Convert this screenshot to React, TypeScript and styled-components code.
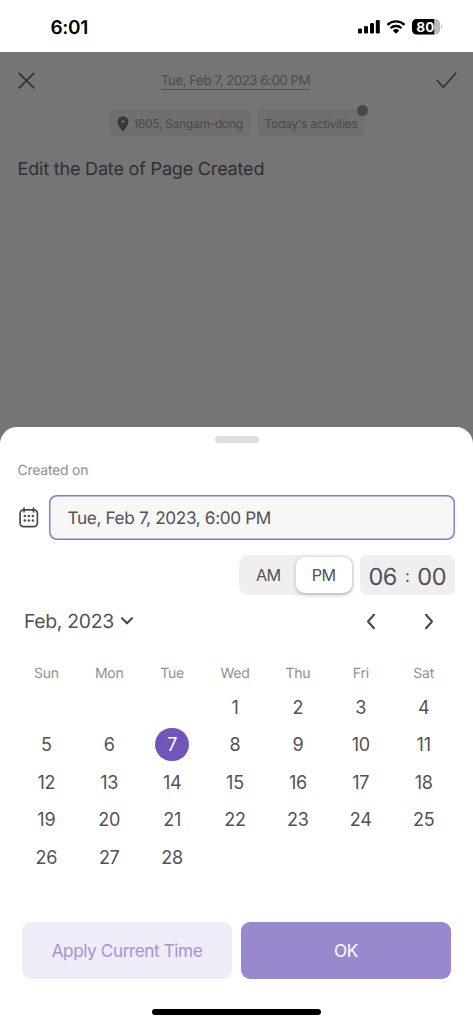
import React from "react";
import styled, { createGlobalStyle } from "styled-components";

const GlobalStyle = createGlobalStyle`
  * { box-sizing: border-box; }
  body { margin: 0; background: #fff; font-family: Inter, "Liberation Sans", sans-serif; font-weight: 400; text-rendering: geometricPrecision; }
  button { font: inherit; border: 0; padding: 0; margin: 0; background: none; color: inherit; }
`;

const Screen = styled.main`
  width: 473px;
  height: 1024px;
  display: flex;
  flex-direction: column;
  background: #757575;
  overflow: hidden;
`;

const StatusBar = styled.header`
  height: 52px;
  flex: none;
  display: flex;
  align-items: center;
  justify-content: space-between;
  padding: 2px 30px 0 50.5px;
  background: #fff;
  color: #000;
`;

const Clock = styled.span`
  font-size: 19px;
  font-weight: 600;
  letter-spacing: -0.35px;
`;

const Page = styled.section`
  height: 375px;
  flex: none;
  display: flex;
  flex-direction: column;
`;

const TopBar = styled.div`
  height: 57px;
  display: flex;
  align-items: center;
  justify-content: space-between;
  padding: 0 16px 0 18px;
  color: #333;
`;

const PageDate = styled.span`
  font-size: 13.4px;
  line-height: 20px;
  height: 19px;
  border-bottom: 1px solid #505050;
  color: #4b4b4b;
  letter-spacing: -0.54px;
`;

const Chips = styled.div`
  display: flex;
  gap: 8px;
  padding-left: 109.5px;
`;

const Chip = styled.div<{ $width: number }>`
  position: relative;
  width: ${(p) => p.$width}px;
  height: 27px;
  display: flex;
  align-items: center;
  justify-content: center;
  gap: 4.5px;
  padding-top: 2px;
  border-radius: 4px;
  background: #6f6f6f;
  color: #4a4a4a;
  font-size: 12.1px;
  letter-spacing: -0.33px;
  white-space: nowrap;
`;

const Dot = styled.i`
  position: absolute;
  top: -4px;
  right: -4px;
  width: 11px;
  height: 11px;
  border-radius: 50%;
  background: #484848;
`;

const Title = styled.h1`
  margin: 22.6px 0 0 17.5px;
  font-size: 18px;
  line-height: 22px;
  font-weight: 400;
  letter-spacing: -0.18px;
  color: #303030;
`;

const Sheet = styled.section`
  flex: 1;
  display: flex;
  flex-direction: column;
  border-radius: 17px 17px 0 0;
  background: #fff;
  color: #525254;
`;

const Handle = styled.div`
  width: 44px;
  height: 7px;
  flex: none;
  margin: 8.5px auto 0;
  border-radius: 4px;
  background: #dddce3;
`;

const Label = styled.div`
  margin: 18px 0 0 17.5px;
  font-size: 14px;
  line-height: 18px;
  padding-top: 1px;
  height: 18px;
  letter-spacing: -0.25px;
  color: #909094;
`;

const FieldRow = styled.div`
  display: flex;
  align-items: center;
  gap: 10px;
  margin-top: 16.5px;
  padding: 0 18px 0 19px;
`;

const DateField = styled.div`
  flex: 1;
  height: 45px;
  display: flex;
  align-items: center;
  padding: 1px 0 0 18.5px;
  border-radius: 8px;
  box-shadow: inset 0 0 0 1.5px #8f78d2;
  background: #f7f7f7;
  font-size: 17.2px;
  letter-spacing: -0.36px;
`;

const TimeRow = styled.div`
  display: flex;
  justify-content: flex-end;
  gap: 6px;
  margin-top: 15px;
  padding-right: 18px;
`;

const Toggle = styled.div`
  width: 115px;
  height: 40px;
  display: flex;
  padding: 2px 2.5px 2px 1.5px;
  border-radius: 10px;
  background: #efefef;
`;

const ToggleOption = styled.button<{ $active?: boolean }>`
  flex: 1;
  border-radius: 9px;
  font-size: 16.2px;
  letter-spacing: -0.6px;
  background: ${(p) => (p.$active ? "#fff" : "transparent")};
  box-shadow: ${(p) => (p.$active ? "0 1.5px 4px rgba(60, 50, 90, 0.3)" : "none")};
`;

const TimeBox = styled.div`
  width: 95px;
  height: 40px;
  display: flex;
  align-items: center;
  justify-content: space-between;
  padding: 3px 9px 0 8.5px;
  border-radius: 7px;
  background: #efefef;
  font-size: 23.5px;
  letter-spacing: -0.5px;
`;

const Colon = styled.span`
  font-size: 17px;
`;

const MonthRow = styled.div`
  height: 34px;
  display: flex;
  align-items: center;
  margin-top: 9px;
  margin-bottom: 0.5px;
  padding: 0 38px 0 24px;
`;

const Month = styled.span`
  font-size: 19.4px;
  letter-spacing: -0.33px;
  margin-right: 6.5px;
`;

const MonthNav = styled.div`
  display: flex;
  gap: 46px;
  margin-left: auto;
`;

const Calendar = styled.div`
  display: grid;
  grid-template-columns: repeat(7, 62.9px);
  grid-template-rows: 32px repeat(5, 37.6px);
  align-items: center;
  justify-items: center;
  margin: 17.8px 0 0 14.9px;
`;

const Weekday = styled.span`
  padding-top: 1.5px;
  font-size: 14px;
  letter-spacing: -0.25px;
  color: #909094;
`;

const Day = styled.button<{ $selected?: boolean; $start?: number }>`
  width: 33.5px;
  height: 33.5px;
  border-radius: 50%;
  font-size: 18px;
  letter-spacing: -0.25px;
  grid-column-start: ${(p) => p.$start ?? "auto"};
  color: ${(p) => (p.$selected ? "#fff" : "inherit")};
  background: ${(p) => (p.$selected ? "#7055bc" : "transparent")};
`;

const Actions = styled.div`
  display: flex;
  gap: 9px;
  margin-top: 46px;
  padding: 0 22px;
`;

const Action = styled.button<{ $primary?: boolean }>`
  flex: 1;
  height: 56.5px;
  border-radius: 9px;
  font-size: 17.2px;
  letter-spacing: -0.42px;
  color: ${(p) => (p.$primary ? "#fff" : "#a593d8")};
  background: ${(p) => (p.$primary ? "#9a88cf" : "#eeecf7")};
`;

const HomeIndicator = styled.div`
  width: 169px;
  height: 6px;
  flex: none;
  margin: auto auto 9px;
  border-radius: 3px;
  background: #000;
`;

const StatusIcons = () => (
  <svg width="86" height="20" viewBox="0 0 86 20">
    <rect x="1" y="11.5" width="4" height="5" rx="1.3" />
    <rect x="7" y="9" width="4" height="7.5" rx="1.3" />
    <rect x="13" y="6" width="4" height="10.5" rx="1.3" />
    <rect x="18.8" y="3" width="4" height="13.5" rx="1.3" />
    <g fill="none" stroke="#000" strokeWidth="2.3">
      <path d="M30.5 7.8a12.5 12.5 0 0 1 17 0" />
      <path d="M33.5 11.1a8.2 8.2 0 0 1 11 0" />
    </g>
    <path d="M39 16.7 35.8 13.5a4.8 4.8 0 0 1 6.4 0Z" />
    <path d="M59.5 2H77.5v15.5H59.5a4.5 4.5 0 0 1-4.5-4.5v-6.5a4.5 4.5 0 0 1 4.5-4.5Z" />
    <path d="M77.5 2h1a4.5 4.5 0 0 1 4.5 4.5v6.5a4.5 4.5 0 0 1-4.5 4.5h-1Z" fill="#bcbcbc" />
    <path d="M84 7.5c2 .6 2 4 0 4.6Z" fill="#c8c8d4" />
    <text x="68.3" y="14.7" textAnchor="middle" fontSize="13.6" fontWeight="700" fill="#fff">80</text>
  </svg>
);

const CloseIcon = () => (
  <svg width="17" height="17" viewBox="0 0 17 17" fill="none" stroke="currentColor" strokeWidth="1.7" strokeLinecap="round">
    <path d="M1.2 1.4 15.8 15.8M15.8 1.4 1.2 15.8" />
  </svg>
);

const CheckIcon = () => (
  <svg width="21" height="17" viewBox="0 0 21 17" fill="none" stroke="currentColor" strokeWidth="1.7" strokeLinecap="round" strokeLinejoin="round">
    <path d="M1.2 8.3 7.3 15.3 19.5 1.5" />
  </svg>
);

const PinIcon = () => (
  <svg width="12" height="16" viewBox="0 0 12 16">
    <path d="M6 .2A5.5 5.5 0 0 0 .5 5.7C.5 9.5 6 15.3 6 15.3S11.5 9.5 11.5 5.7A5.5 5.5 0 0 0 6 .2Z" fill="#383838" />
    <circle cx="6" cy="5.6" r="1.6" fill="#6a6a6a" />
  </svg>
);

const CalendarIcon = () => (
  <svg width="20" height="22" viewBox="0 0 20 22" fill="none" stroke="#4a4a4c" strokeWidth="1.7" strokeLinecap="round">
    <rect x="1.1" y="2.8" width="17.3" height="16.8" rx="3.5" />
    <path d="M5 1.2v3.6M14.5 1.2v3.6" />
    <g fill="#4a4a4c" stroke="none">
      {[9, 13.5].map((y) => [5.8, 9.8, 13.8].map((x) => <circle key={`${x}-${y}`} cx={x} cy={y} r="1.25" />))}
    </g>
  </svg>
);

const Chevron = ({ d, width, height }: { d: string; width: number; height: number }) => (
  <svg width={width} height={height} viewBox={`0 0 ${width} ${height}`} fill="none" stroke="#4a4a4c" strokeWidth="2.1" strokeLinecap="round" strokeLinejoin="round">
    <path d={d} />
  </svg>
);

const weekdays = ["Sun", "Mon", "Tue", "Wed", "Thu", "Fri", "Sat"];
const days = Array.from({ length: 28 }, (_, i) => i + 1);

export default function App() {
  return (
    <>
      <GlobalStyle />
      <Screen>
        <StatusBar>
          <Clock>6:01</Clock>
          <StatusIcons />
        </StatusBar>
        <Page>
          <TopBar>
            <CloseIcon />
            <PageDate>Tue, Feb 7, 2023 6:00 PM</PageDate>
            <CheckIcon />
          </TopBar>
          <Chips>
            <Chip $width={140.5}>
              <PinIcon />
              1605, Sangam-dong
            </Chip>
            <Chip $width={106}>
              Today's activities
              <Dot />
            </Chip>
          </Chips>
          <Title>Edit the Date of Page Created</Title>
        </Page>
        <Sheet>
          <Handle />
          <Label>Created on</Label>
          <FieldRow>
            <CalendarIcon />
            <DateField>Tue, Feb 7, 2023, 6:00 PM</DateField>
          </FieldRow>
          <TimeRow>
            <Toggle>
              <ToggleOption>AM</ToggleOption>
              <ToggleOption $active>PM</ToggleOption>
            </Toggle>
            <TimeBox>
              <span>06</span>
              <Colon>:</Colon>
              <span>00</span>
            </TimeBox>
          </TimeRow>
          <MonthRow>
            <Month>Feb, 2023</Month>
            <Chevron width={14} height={10} d="M2 2.2 7 7.3 12 2.2" />
            <MonthNav>
              <Chevron width={12} height={17} d="M9 1.8 3 8.5 9 15.2" />
              <Chevron width={12} height={17} d="M3 1.8 9 8.5 3 15.2" />
            </MonthNav>
          </MonthRow>
          <Calendar>
            {weekdays.map((name) => (
              <Weekday key={name}>{name}</Weekday>
            ))}
            {days.map((n) => (
              <Day key={n} $start={n === 1 ? 4 : undefined} $selected={n === 7}>
                {n}
              </Day>
            ))}
          </Calendar>
          <Actions>
            <Action>Apply Current Time</Action>
            <Action $primary>OK</Action>
          </Actions>
          <HomeIndicator />
        </Sheet>
      </Screen>
    </>
  );
}
